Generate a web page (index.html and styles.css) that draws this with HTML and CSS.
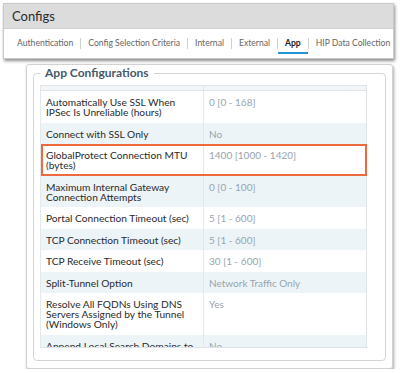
FILE: index.html
```html
<!DOCTYPE html>
<html>
    <head>
        <title>Configs</title>
        <link rel="stylesheet" href="styles.css">
    </head>
    <body>
        <div class="top-panel">
            <div class="top-header">Configs</div>
            <div class="tabs">
                <span class="tab">Authentication</span>
                <span class="tab-sep"></span>
                <span class="tab">Config Selection Criteria</span>
                <span class="tab-sep"></span>
                <span class="tab">Internal</span>
                <span class="tab-sep"></span>
                <span class="tab">External</span>
                <span class="tab-sep"></span>
                <span class="tab tab-active">App</span>
                <span class="tab-sep"></span>
                <span class="tab">HIP Data Collection</span>
            </div>
        </div>

        <div class="dialog">
            <fieldset class="app-box">
                <legend>App Configurations</legend>
                <div class="table-scroll">
                    <table class="config-table">
                        <tr class="head-row"><td></td><td></td></tr>
                        <tr>
                            <td>Automatically Use SSL When IPSec Is Unreliable (hours)</td>
                            <td class="value">0 [0 - 168]</td>
                        </tr>
                        <tr class="alt">
                            <td>Connect with SSL Only</td>
                            <td class="value">No</td>
                        </tr>
                        <tr class="highlight">
                            <td>GlobalProtect Connection MTU (bytes)</td>
                            <td class="value">1400 [1000 - 1420]</td>
                        </tr>
                        <tr class="alt">
                            <td>Maximum Internal Gateway Connection Attempts</td>
                            <td class="value">0 [0 - 100]</td>
                        </tr>
                        <tr>
                            <td>Portal Connection Timeout (sec)</td>
                            <td class="value">5 [1 - 600]</td>
                        </tr>
                        <tr class="alt">
                            <td>TCP Connection Timeout (sec)</td>
                            <td class="value">5 [1 - 600]</td>
                        </tr>
                        <tr>
                            <td>TCP Receive Timeout (sec)</td>
                            <td class="value">30 [1 - 600]</td>
                        </tr>
                        <tr class="alt">
                            <td>Split-Tunnel Option</td>
                            <td class="value">Network Traffic Only</td>
                        </tr>
                        <tr>
                            <td>Resolve All FQDNs Using DNS Servers Assigned by the Tunnel (Windows Only)</td>
                            <td class="value">Yes</td>
                        </tr>
                        <tr class="alt">
                            <td>Append Local Search Domains to Searchable Domain List</td>
                            <td class="value">No</td>
                        </tr>
                    </table>
                </div>
            </fieldset>
        </div>
    </body>
</html>
```

FILE: styles.css
```css
body {
    margin: 0;
    padding: 3px 0 0 0;
    background-color: white;
    font-family: Lato, "Open Sans", sans-serif;
    color: #333;
}

.top-panel {
    width: 389px;
    margin-left: 3px;
    border: 1px solid #c9c9c9;
    box-shadow: 1px 2px 3px rgba(0, 0, 0, 0.45);
    background-color: white;
}
.top-header {
    height: 24px;
    line-height: 24px;
    padding-left: 8px;
    background-color: #dcdcdc;
    border-bottom: 1px solid #cfcfcf;
    font-size: 13px;
    color: #2b2b2b;
}

.tabs {
    display: flex;
    align-items: center;
    height: 29px;
    padding-left: 6px;
    white-space: nowrap;
}
.tab {
    font-size: 8.6px;
    line-height: 10px;
    color: #666;
    padding: 5px 7px 4px 7px;
    border-bottom: 2px solid transparent;
}
.tab-active {
    font-weight: bold;
    color: #222;
    border-bottom-color: #2196d3;
}
.tab-sep {
    width: 1px;
    height: 11px;
    flex-shrink: 0;
    background-color: #d0d0d0;
}

.dialog {
    width: 353px;
    margin: 5px 0 0 26px;
    padding: 1px 6px 7px 6px;
    border: 1px solid #d2d2d2;
    border-radius: 3px;
    box-shadow: 1px 2px 3px rgba(0, 0, 0, 0.35);
    background-color: white;
}

.app-box {
    margin: 0;
    padding: 0 17px 12px 6px;
    border: 1px solid #d3d6d8;
    border-radius: 4px;
}
.app-box legend {
    padding: 0 5px;
    font-size: 12px;
    font-weight: bold;
    color: #46596b;
    line-height: 14px;
}

.table-scroll {
    margin-top: 5px;
    height: 262px;
    overflow: hidden;
    border-bottom: 1px solid #dde3e6;
}

.config-table {
    width: 327px;
    border-collapse: collapse;
    border: 1px solid #dde3e6;
    table-layout: fixed;
}
.config-table td {
    width: 50%;
    padding: 6px 5px 5.5px 5px;
    font-size: 10.2px;
    line-height: 10px;
    vertical-align: top;
    color: #2a2a2a;
    border-left: 1px solid #e3e8eb;
}
.config-table td.value {
    color: #97a4ad;
    font-size: 10px;
}
.config-table tr.alt td {
    background-color: #edf4f7;
}
.config-table tr.head-row td {
    height: 4px;
    padding: 0;
    background-color: #f3f5f6;
    border-bottom: 1px solid #dde3e6;
}
.config-table tr.highlight {
    outline: 2px solid #ee6a3e;
    outline-offset: -2px;
}
```
